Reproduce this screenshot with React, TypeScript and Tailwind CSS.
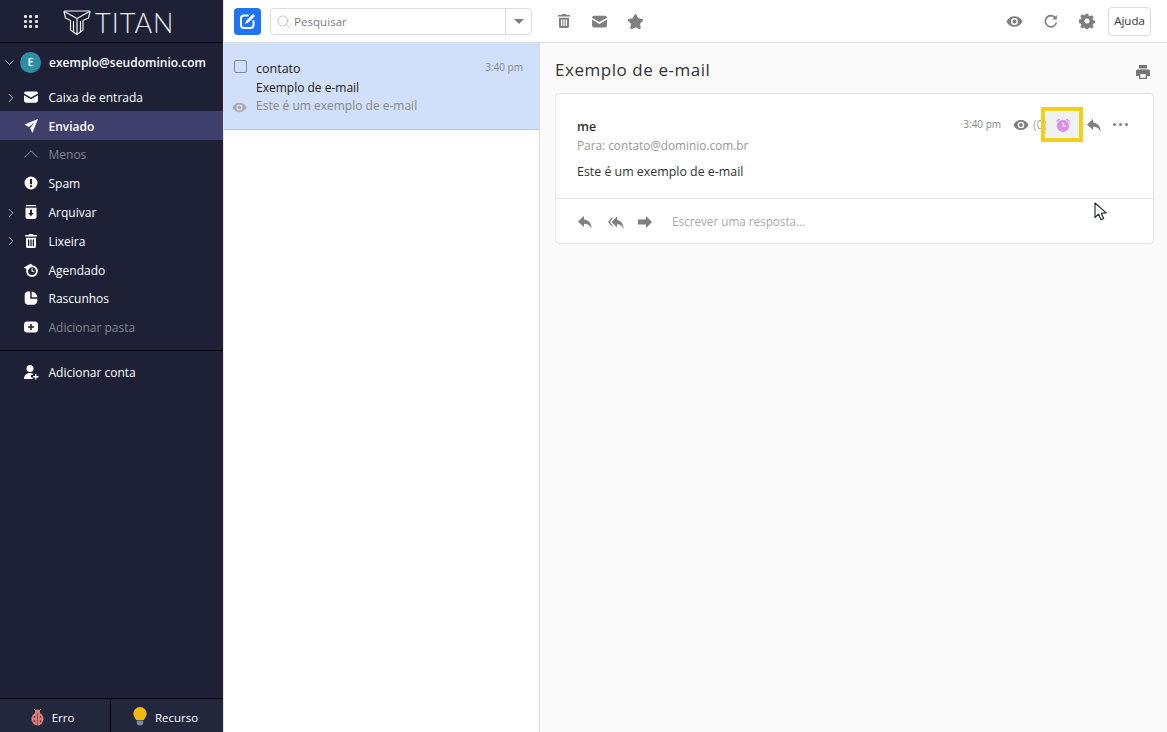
import React from "react";
import { ChevronDown, ChevronRight, ChevronUp, Search } from "lucide-react";

const I = ({ children, s = 16, v = "0 0 16 16", c = "" }: { children: React.ReactNode; s?: number; v?: string; c?: string }) => (
  <svg width={s} height={s} viewBox={v} fill="currentColor" className={"shrink-0 " + c}>{children}</svg>
);

const Mail = ({ s = 16 }: { s?: number }) => <I s={s}><path d="M1 4.400C1 3.100 2.100 2.500 3.500 2.500h9c1.400 0 2.500.6 2.500 1.900L8 8.500 1 4.400Z" /><path d="M1 6.200V11.500C1 12.800 2.100 13.700 3.500 13.700h9c1.400 0 2.500-.9 2.500-2.200V6.200L8 10.300 1 6.200Z" /></I>;
const Send = () => <I s={16}><path d="M15 1 1.500 6.600l4.300 2.300L11.500 4.500 7.100 10.200 9.400 15 15 1Z" /></I>;
const Alert = () => <I s={16}><path fillRule="evenodd" d="M8 1.500a6.500 6.500 0 1 1 0 13 6.500 6.500 0 0 1 0-13ZM7 4v5.200h2V4H7Zm0 6.200V12h2v-1.800H7Z" /></I>;
const Archive = () => <I s={16}><path d="M4 1h8c.8 0 1.300.5 1.500 1.300H2.500C2.700 1.500 3.200 1 4 1Z" /><path fillRule="evenodd" d="M2.500 3.800h11V13c0 1.200-.9 2-2 2h-7c-1.100 0-2-.8-2-2V3.800Zm4.500 2V9H5.200L8 12.300 10.800 9H9V5.800H7Z" /></I>;
const Trash = ({ s = 16 }: { s?: number }) => <I s={s}><path d="M6 1h4l.5 1.100H14v1.500H2V2.100h3.500L6 1Z" /><path fillRule="evenodd" d="M3 4.700h10v8.800c0 .8-.7 1.500-1.500 1.500h-7C3.700 15 3 14.300 3 13.500V4.700ZM5 6.500V13h1.300V6.500H5Zm2.350 0V13h1.300V6.500h-1.300ZM9.700 6.500V13H11V6.500H9.700Z" /></I>;
const Sched = () => <I s={16}><path d="M.8 5.500 7.500 1.800 9.500 3 5 8 .8 5.500Z" /><path fillRule="evenodd" d="M9 3.200a5.900 5.900 0 1 1 0 11.800A5.900 5.900 0 0 1 9 3.200Zm0 2a3.900 3.900 0 1 0 0 7.800 3.900 3.900 0 0 0 0-7.800Z" /><path d="M8.500 6.200h1.100v2.500h1.800v1.100H8.500V6.200Z" /></I>;
const Draft = () => <I s={16}><path d="M7.200 1.500H5C3 1.500 1.700 3 1.700 5v6.500c0 1.900 1.500 3.300 3.300 3.300h5.500c2.200 0 3.800-1.700 3.800-4V8.800H7.200V1.500Z" /><path d="M8.700 1.500v5.800h5.600C14.100 4.300 11.800 1.800 8.700 1.500Z" /></I>;
const AddFolder = () => <I s={16}><path fillRule="evenodd" d="M4 2.500h8c1.700 0 3 1.300 3 3v5c0 1.700-1.300 3-3 3H4c-1.700 0-3-1.300-3-3v-5c0-1.700 1.300-3 3-3ZM7.200 5v2.200H5v1.600h2.200V11h1.600V8.800H11V7.200H8.800V5H7.200Z" /></I>;
const AddUser = () => <I s={16}><circle cx="7" cy="4.500" r="3.500" /><path d="M1 15c0-3.500 2.500-6 6-6 1 0 2 .2 2.700.6V11H8v2.500h1.700V15H1Z" /><path d="M12 10h1.400v2H15.500v1.400h-2.100v2H12v-2H10v-1.400h2v-2Z" /></I>;

const FilledEye = ({ s = 16, c = "" }: { s?: number; c?: string }) => (
  <I s={s} c={c}>
    <path fillRule="evenodd" d="M8 3c3.400 0 6.200 2.100 7.500 5-1.300 2.900-4.100 5-7.500 5S1.800 10.900.5 8C1.800 5.100 4.600 3 8 3Zm0 1.700a3.300 3.300 0 1 0 0 6.600 3.300 3.300 0 0 0 0-6.600Z" />
    <circle cx="8" cy="8" r="1.900" />
  </I>
);
const Reply = ({ s = 16 }: { s?: number }) => <I s={s}><path d="M7 2 1 7.500 7 13V9.700c3.300 0 5.700 1.300 7.500 4.800 .4-4.800-2.600-8.500-7.500-9V2Z" /></I>;
const ReplyAll = () => <I s={17} v="0 0 17 16"><path d="M5.500 2.500 1 7.500l4.500 5v-1.800L3 7.500l2.500-3.200V2.500Z" /><path d="M10 2 4.500 7.500 10 13V9.700c3 0 5.200 1.300 6.500 4.800 .3-4.800-2.300-8.500-6.500-9V2Z" /></I>;
const Forward = () => <I s={16}><path d="M9 2l6 6-6 6v-3.500H1v-5h8V2Z" /></I>;

const Alarm = ({ c }: { c?: string }) => (
  <I s={16} c={c}>
    <path d="M1 4.300 4 1.500l1 1L2 5.300 1 4.300ZM15 4.300 12 1.500l-1 1 3 2.800 1-1Z" />
    <path fillRule="evenodd" d="M8 2.800a6.100 6.100 0 1 1 0 12.200A6.100 6.100 0 0 1 8 2.800Zm-.8 2.700v4.300h3.900V8.500H8.500v-3H7.200Z" />
  </I>
);

const TitanMark = () => (
  <svg width="28" height="27" viewBox="0 0 28 27" fill="none" stroke="currentColor" strokeWidth="1.200" strokeLinejoin="round">
    <path d="M1 2.500 2 2h24l1 .5-1.500 6.500L20 11.500V21l-6 4.500L7.500 21v-9.500L2.500 9 1 2.500Z" />
    <path d="M1.500 2.500 14 9.500 26.500 2.500M14 9.500v16M10.500 12v11M17.500 12v11" />
  </svg>
);

type Row = { icon: React.ReactNode; label: string; chev?: boolean; active?: boolean; dim?: boolean };
const rows: Row[] = [
  { icon: <Mail />, label: "Caixa de entrada", chev: true },
  { icon: <Send />, label: "Enviado", active: true },
  { icon: <ChevronUp size={26} strokeWidth={0.900} className="shrink-0 text-[#8d8f9c]" />, label: "Menos", dim: true },
  { icon: <Alert />, label: "Spam" },
  { icon: <Archive />, label: "Arquivar", chev: true },
  { icon: <Trash />, label: "Lixeira", chev: true },
  { icon: <Sched />, label: "Agendado" },
  { icon: <Draft />, label: "Rascunhos" },
  { icon: <AddFolder />, label: "Adicionar pasta", dim: true },
];

function SideRow({ icon, label, chev, active, dim }: Row) {
  return (
    <div className={"relative flex h-[28.8px] items-center pl-[22px] text-[12px] " + (active ? "bg-[#3e3f6b] " : "") + (dim ? "text-[#83848f]" : "text-white")}>
      {chev && <ChevronRight size={14} strokeWidth={1.500} className="absolute left-[4px] top-[8px] text-[#c5c6cf]" />}
      <span className="flex w-[18px] justify-center text-white">{icon}</span>
      <span className={"ml-[8.500px] pt-[2px]" + (active ? " font-semibold" : "")}>{label}</span>
    </div>
  );
}

export default function App() {
  return (
    <div className="relative flex h-[732px] w-[1167px] overflow-hidden bg-white font-['Open_Sans',sans-serif]">
      <aside className="flex h-full w-[223px] shrink-0 flex-col bg-[#1e2136] text-white">
        <div className="flex h-[43px] shrink-0 items-center border-b border-black">
          <div className="ml-[24px] grid w-[14px] grid-cols-3 gap-[2px]">
            {Array.from({ length: 9 }).map((_, i) => <span key={i} className="h-[3px] w-[3px] rounded-[1px] bg-[#e4e4e8]" />)}
          </div>
          <span className="ml-[25px] mt-[3px] text-[#eef0f2]"><TitanMark /></span>
          <span className="ml-[4px] mt-[2px] font-['Lato',sans-serif] text-[27px] font-light leading-none tracking-[1px] text-[#e8e9ec]">TITAN</span>
        </div>
        <div className="flex h-[39px] shrink-0 items-center">
          <ChevronDown size={15} strokeWidth={1.500} className="ml-[2px] text-[#c5c6cf]" />
          <span className="ml-[3px] flex h-[21px] w-[21px] items-center justify-center rounded-full bg-[#2e8ea6] text-[11px] font-semibold">E</span>
          <span className="ml-[8px] text-[12px] font-semibold">exemplo@seudominio.com</span>
        </div>
        <div className="mt-[0.500px]">
          {rows.map((r) => <SideRow key={r.label} {...r} />)}
        </div>
        <div className="mt-[8px] border-t border-black pt-[6.500px]">
          <SideRow icon={<AddUser />} label="Adicionar conta" />
        </div>
        <div className="mt-auto flex h-[34px] shrink-0 items-center border-t border-black bg-[#23273b] text-[11.500px]">
          <div className="flex h-full w-[111px] items-center justify-center border-r border-black pr-[6px] pt-[2px]">
            <svg width="15" height="18" viewBox="0 0 15 18" className="mr-[7px]" fill="#d97f7a">
              <ellipse cx="7.500" cy="11" rx="6" ry="6.500" />
              <circle cx="7.500" cy="4" r="2.500" />
              <path d="M4 1l2 2M11 1 9 3" stroke="#d97f7a" strokeWidth="1" />
              <path d="M7.200 5h.6v12h-.6z" fill="#5b3a44" />
              <circle cx="4.500" cy="9" r=".9" fill="#5b3a44" /><circle cx="10.500" cy="9" r=".9" fill="#5b3a44" />
              <circle cx="4.500" cy="13" r=".9" fill="#5b3a44" /><circle cx="10.500" cy="13" r=".9" fill="#5b3a44" />
            </svg>
            <span className="pt-[2px]">Erro</span>
          </div>
          <div className="flex h-full flex-1 items-center justify-center pr-[3px] pt-[2px]">
            <svg width="14" height="19" viewBox="0 0 14 19" className="mr-[8px]">
              <path d="M7 0a6.700 6.700 0 0 1 6.700 6.700c0 2.800-2.200 4.100-2.700 6.300H3C2.500 10.800.3 9.500.3 6.700A6.700 6.700 0 0 1 7 0Z" fill="#f3b90f" />
              <path d="M3.800 13.500h6.400V16c0 1-1 2.500-3.200 2.500S3.800 17 3.800 16v-2.500Z" fill="#7d8e99" />
            </svg>
            <span className="pt-[2px]">Recurso</span>
          </div>
        </div>
      </aside>

      <main className="flex min-w-0 flex-1 flex-col border-l border-[#e3e3e3]">
        <header className="flex h-[43px] shrink-0 items-center border-b border-[#dfdfdf] bg-white">
          <span className="ml-[10px] flex h-[27px] w-[27px] items-center justify-center rounded-[4px] bg-[#2173f5] text-white">
            <svg width="17" height="17" viewBox="0 0 17 17" fill="none" stroke="currentColor" strokeWidth="2" strokeLinecap="round">
              <path d="M9 2.500H5A3 3 0 0 0 2 5.500v6.500a3 3 0 0 0 3 3h6.500a3 3 0 0 0 3-3V8" />
              <path d="M7 10l1-2.500L14 1.500 15.500 3 9.500 9 7 10Z" fill="currentColor" strokeWidth="1" />
            </svg>
          </span>
          <div className="ml-[9px] flex h-[27px] w-[262px] items-center rounded-[4px] border border-[#dcdcdc] bg-white">
            <Search size={15} strokeWidth={1.200} className="ml-[5px] text-[#b3b3b3]" />
            <span className="ml-[3px] flex-1 pt-[2px] text-[11.600px] text-[#808080]">Pesquisar</span>
            <span className="flex h-full w-[26px] items-center justify-center border-l border-[#dcdcdc]">
              <span className="h-0 w-0 border-x-[5px] border-t-[5px] border-x-transparent border-t-[#808080]" />
            </span>
          </div>
          <span className="ml-[24px] text-[#7f7f7f]"><Trash /></span>
          <span className="ml-[19px] text-[#7f7f7f]"><Mail s={17} /></span>
          <span className="ml-[19px] text-[#7f7f7f]"><I s={17}><path d="M8 1c.4 0 .7.2.9.6l1.700 3.400 3.800.6c.9.1 1.200 1.200.6 1.800l-2.800 2.700.7 3.800c.1.900-.8 1.500-1.600 1.100L8 13.300 4.700 15c-.8.4-1.700-.2-1.600-1.100l.7-3.800L1 7.400c-.6-.6-.3-1.700.6-1.800l3.800-.6 1.700-3.400C7.300 1.200 7.600 1 8 1Z" /></I></span>
          <div className="ml-auto flex items-center text-[#7f7f7f]">
            <FilledEye s={17} />
            <svg width="14" height="14" viewBox="0 0 15 15" fill="none" stroke="currentColor" strokeWidth="1.800" className="ml-[21px]">
              <path d="M12.200 4A6 6 0 1 0 13.300 9" />
              <path d="M13.800 1v5h-5z" fill="currentColor" stroke="none" />
            </svg>
            <I s={16} c="ml-[21px]"><path fillRule="evenodd" d="M6.700.7h2.600l.4 2 1.300.6 1.800-1.100 1.900 1.900-1.100 1.800.6 1.300 2 .4v2.600l-2 .4-.6 1.300 1.100 1.800-1.900 1.900-1.800-1.100-1.300.6-.4 2H6.700l-.4-2-1.300-.6-1.800 1.100-1.900-1.900 1.100-1.800-.6-1.300-2-.4V6.600l2-.4.6-1.300L1.300 3.100l1.900-1.900L5 2.300l1.300-.6.400-2ZM8 5.500a2.500 2.500 0 1 0 0 5 2.500 2.500 0 0 0 0-5Z" /></I>
            <span className="ml-[13px] mr-[16px] flex h-[29px] w-[43px] items-center justify-center rounded-[4px] border border-[#dcdcdc] text-[11.500px] text-[#333]">Ajuda</span>
          </div>
        </header>
        <div className="flex min-h-0 flex-1">
          <section className="w-[316px] shrink-0 border-r border-[#dfdfdf] bg-white">
            <div className="relative h-[87px] border-b border-[#a9c9ef] bg-[#d0dffa] pl-[32px] pt-[16px]">
              <span className="absolute left-[10px] top-[17px] h-[13px] w-[13px] rounded-[2px] border border-[#7f8794]" />
              <div className="flex items-center justify-between pr-[16px] text-[12.500px] leading-[20px] text-[#222]">
                <span>contato</span>
                <span className="-mt-[4px] text-[10px] text-[#888]">3:40 pm</span>
              </div>
              <div className="text-[12px] leading-[18px] text-[#222]">Exemplo de e-mail</div>
              <div className="text-[12px] leading-[18px] text-[#888]">Este é um exemplo de e-mail</div>
              <FilledEye s={15} c="absolute left-[8px] top-[57px] text-[#acacac]" />
            </div>
          </section>
          <section className="min-w-0 flex-1 bg-[#fafafa] pl-[15px] pr-[13px]">
            <div className="flex h-[50px] items-start justify-between pt-[14px]">
              <h1 className="text-[17px] font-normal leading-[26px] tracking-[0.550px] text-[#333]">Exemplo de e-mail</h1>
              <I s={16} c="mt-[7px] mr-[3px] text-[#757575]"><path fillRule="evenodd" d="M4 1h8v3.500H4V1ZM2.500 5.500h11c.8 0 1.500.7 1.500 1.500v5h-3v3H4v-3H1V7c0-.8.700-1.500 1.500-1.500ZM5.300 10v3.700h5.400V10H5.300Z" /></I>
            </div>
            <div className="rounded-[4px] border border-[#e3e3e3] bg-white">
              <div className="relative h-[105px] border-b border-[#e3e3e3] px-[21px] pt-[24px]">
                <div className="text-[12.500px] font-semibold leading-[17px] text-[#333]">me</div>
                <div className="mt-[1px] text-[11.800px] leading-[18px] text-[#999]">Para: contato@dominio.com.br</div>
                <div className="mt-[9px] text-[12.400px] leading-[18px] text-[#333]">Este é um exemplo de e-mail</div>
                <div className="absolute right-[25px] top-[18px] flex items-center text-[#7f7f7f]">
                  <span className="text-[10px] text-[#888]">3:40 pm</span>
                  <FilledEye s={16} c="ml-[12px]" />
                  <span className="ml-[4px] text-[12px] text-[#aaa]">(0)</span>
                  <span className="-ml-[1px] flex h-[25px] w-[33px] items-center justify-center rounded-[2px] bg-[#eff0f0]"><Alarm c="text-[#dd8fe6]" /></span>
                  <span className="ml-[7px]"><Reply /></span>
                  <span className="ml-[11px] flex w-[15px] justify-between">
                    <span className="h-[3px] w-[3px] rounded-full bg-[#7f7f7f]" />
                    <span className="h-[3px] w-[3px] rounded-full bg-[#7f7f7f]" />
                    <span className="h-[3px] w-[3px] rounded-full bg-[#7f7f7f]" />
                  </span>
                </div>
              </div>
              <div className="flex h-[44px] items-center pl-[21px] pt-[2px] text-[#7f7f7f]">
                <Reply />
                <span className="ml-[14px]"><ReplyAll /></span>
                <span className="ml-[13px]"><Forward /></span>
                <span className="ml-[19px] text-[11.700px] text-[#aaa]">Escrever uma resposta...</span>
              </div>
            </div>
          </section>
        </div>
      </main>

      <span className="absolute left-[1041px] top-[107px] h-[35px] w-[42px] border-[4px] border-[#f2d016]" />
      <svg width="14" height="20" viewBox="0 0 14 20" className="absolute left-[1094px] top-[202px]">
        <path d="M1 1v14.500l3.600-3.300 2.400 5.600 2.700-1.200-2.400-5.300 4.900-.4L1 1Z" fill="#fff" stroke="#1c2230" strokeWidth="1.100" strokeLinejoin="round" />
      </svg>
    </div>
  );
}
